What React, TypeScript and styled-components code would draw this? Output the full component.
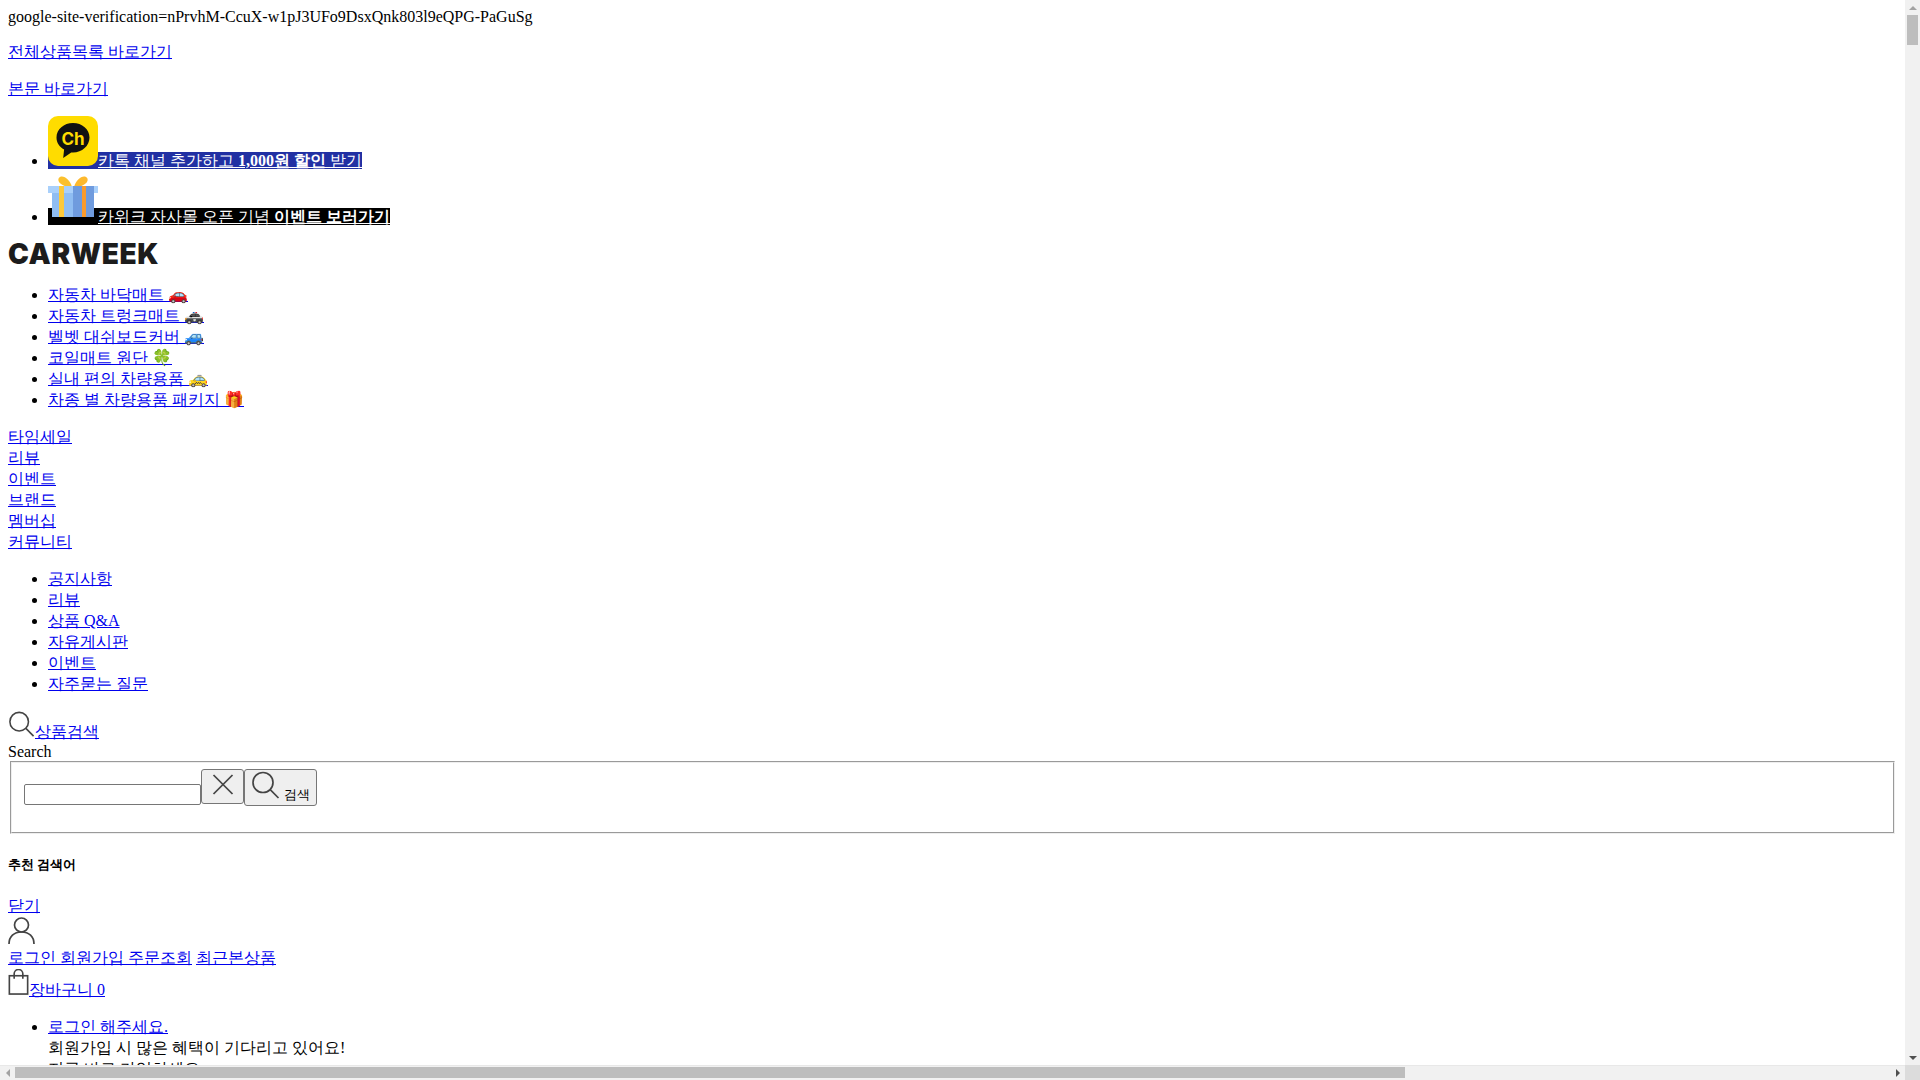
import React from "react";
import styled, { createGlobalStyle } from "styled-components";

const GlobalStyle = createGlobalStyle`
  html, body {
    margin: 0;
    height: 100%;
    overflow: hidden;
  }
  body {
    background: #fff;
    color: #000;
    font-family: "Liberation Serif", serif;
    font-size: 16px;
  }
`;

const categoryItems = [
  "자동차 바닥매트 🚗",
  "자동차 트렁크매트 🚓",
  "벨벳 대쉬보드커버 🚙",
  "코일매트 원단 🍀",
  "실내 편의 차량용품 🚕",
  "차종 별 차량용품 패키지 🎁",
];
const menuItems = ["타임세일", "리뷰", "이벤트", "브랜드", "멤버십", "커뮤니티"];
const communityItems = ["공지사항", "리뷰", "상품 Q&A", "자유게시판", "이벤트", "자주묻는 질문"];

const Shell = styled.div`
  display: grid;
  grid-template-columns: 1fr 15px;
  grid-template-rows: 1fr 15px;
  width: 100vw;
  height: 100vh;
`;

const Page = styled.div`
  overflow: hidden;
  padding: 8px;
  min-width: 0;
  min-height: 0;
`;

const VBar = styled.div`
  display: flex;
  flex-direction: column;
  align-items: center;
  background: #f1f1f1;
`;

const HBar = styled.div`
  display: flex;
  align-items: center;
  background: #f1f1f1;
  box-shadow: inset 0 1px #e8e8e8;
`;

const Corner = styled.div`
  background: #dcdcdc;
`;

const ArrowBox = styled.div`
  display: flex;
  flex: none;
  align-items: center;
  justify-content: center;
  width: 15px;
  height: 15px;
`;

const Arrow = styled.i<{ $dir: "up" | "down" | "left" | "right" }>`
  width: 0;
  height: 0;
  border: 4px solid transparent;
  ${(p) => (p.$dir === "up" ? "border-top: 0; border-bottom: 4px solid #a3a3a3;" : "")}
  ${(p) => (p.$dir === "down" ? "border-bottom: 0; border-top: 4px solid #505050;" : "")}
  ${(p) => (p.$dir === "left" ? "border-left: 0; border-right: 4px solid #a3a3a3;" : "")}
  ${(p) => (p.$dir === "right" ? "border-right: 0; border-left: 4px solid #505050;" : "")}
`;

const VThumb = styled.div`
  flex: none;
  width: 11px;
  height: 30px;
  background: #bdbdbd;
`;

const HThumb = styled.div`
  flex: none;
  width: 1390px;
  height: 11px;
  background: #bdbdbd;
`;

const Filler = styled.div`
  flex: 1;
`;

const Para = styled.p`
  margin: 16px 0;
`;

const List = styled.ul`
  margin: 16px 0;
  padding-left: 40px;
`;

const Link = styled.a`
  color: #0000ee;
  text-decoration: underline;
  cursor: pointer;
`;

const BannerLink = styled.a<{ $bg: string }>`
  color: #fff;
  text-decoration: underline;
  background: ${(p) => p.$bg};
`;

const BannerIcon = styled.svg`
  width: 50px;
  height: 50px;
`;

const Logo = styled.div`
  font-family: Inter, sans-serif;
  font-weight: 900;
  font-size: 28px;
  line-height: 20px;
  padding-bottom: 5px;
  letter-spacing: 0.6px;
  color: #1c1c1c;
`;

const BlockLink = styled.div`
  display: block;
`;

const Section = styled.div`
  margin: 16px 0;
`;

const LineIcon = styled.svg<{ $w: number; $h: number }>`
  width: ${(p) => p.$w}px;
  height: ${(p) => p.$h}px;
  fill: none;
  stroke: #444;
  stroke-width: 1.7;
`;

const Fieldset = styled.fieldset`
  margin: 0 2px;
  padding: 5.6px 12px 26px;
  border: 2px groove;
  min-width: min-content;
`;

const SearchInput = styled.input`
  width: 177px;
  height: 21px;
  padding: 1px 2px;
  box-sizing: border-box;
  border: 1px solid #767676;
  border-radius: 2px;
  font-size: 13.33px;
`;

const IconButton = styled.button`
  padding: 1px 6px;
  border: 1px solid #767676;
  border-radius: 3px;
  background: #efefef;
  font-family: "Liberation Sans", sans-serif;
  font-size: 13.33px;
`;

const Heading = styled.h5`
  margin: 22.18px 0;
  font-size: 13.28px;
  font-weight: bold;
`;

const KakaoIcon = () => (
  <BannerIcon viewBox="0 0 50 50">
    <rect width="50" height="50" rx="10" fill="#ffdc00" />
    <path d="M25 7C15.900 7 8.500 13.300 8.500 21.500c0 5.200 3 9.500 7.600 12l-.9 8.500 8-5.600c.6.1 1.200.1 1.800.1 9.100 0 16.500-6.700 16.500-15S34.100 7 25 7z" fill="#111" />
    <text x="25" y="29" textAnchor="middle" fontFamily="Inter, sans-serif" fontSize="17" fontWeight="700" fill="#ffdc00">Ch</text>
  </BannerIcon>
);

const GiftIcon = () => (
  <BannerIcon viewBox="0 0 50 50">
    <path d="M24 15C22 8 16 3 12 5c-4 2-1 10 12 10z" fill="#fbc02d" />
    <path d="M26 15c2-7 8-12 12-10 4 2 1 10-12 10z" fill="#fdb92e" />
    <rect y="14" width="50" height="7" fill="#a9d0fb" />
    <rect x="4" y="21" width="42" height="24" fill="#8fbdf2" />
    <rect x="25" y="14" width="21" height="31" fill="#6f9bde" />
    <rect x="11" y="14" width="5" height="31" fill="#fdc93a" />
    <rect x="34" y="14" width="4" height="31" fill="#fb9b2c" />
  </BannerIcon>
);

const SearchIcon = ({ w, h }: { w: number; h: number }) => (
  <LineIcon $w={w} $h={h} viewBox="0 0 28 28">
    <circle cx="11.500" cy="11.500" r="10" />
    <line x1="18.700" y1="18.700" x2="27" y2="27" />
  </LineIcon>
);

export default function App() {
  return (
    <Shell>
      <GlobalStyle />
      <Page>
        <div>google-site-verification=nPrvhM-CcuX-w1pJ3UFo9DsxQnk803l9eQPG-PaGuSg</div>
        <Para><Link>전체상품목록 바로가기</Link></Para>
        <Para><Link>본문 바로가기</Link></Para>
        <List>
          <li>
            <BannerLink $bg="#2130a3"><KakaoIcon />카톡 채널 추가하고 <b>1,000원 할인</b> 받기</BannerLink>
          </li>
          <li>
            <BannerLink $bg="#000"><GiftIcon />카위크 자사몰 오픈 기념 <b>이벤트 보러가기</b></BannerLink>
          </li>
        </List>
        <Logo>CARWEEK</Logo>
        <List>
          {categoryItems.map((t) => (
            <li key={t}><Link>{t}</Link></li>
          ))}
        </List>
        <Section>
          {menuItems.map((t) => (
            <BlockLink key={t}><Link>{t}</Link></BlockLink>
          ))}
        </Section>
        <List>
          {communityItems.map((t) => (
            <li key={t}><Link>{t}</Link></li>
          ))}
        </List>
        <div>
          <SearchIcon w={27} h={26} />
          <Link>상품검색</Link>
        </div>
        <div>Search</div>
        <Fieldset>
          <SearchInput />
          <IconButton>
            <LineIcon $w={29} $h={28} viewBox="0 0 28 28">
              <line x1="5" y1="4" x2="24" y2="23" />
              <line x1="24" y1="4" x2="5" y2="23" />
            </LineIcon>
          </IconButton>
          <IconButton>
            <SearchIcon w={29} h={28} /> 검색
          </IconButton>
        </Fieldset>
        <Heading>추천 검색어</Heading>
        <div><Link>닫기</Link></div>
        <div>
          <LineIcon $w={27} $h={27} viewBox="0 0 27 27">
            <circle cx="13.500" cy="8" r="7" />
            <path d="M1 27c0-7.500 5-12 12.500-12S26 19.500 26 27" />
          </LineIcon>
        </div>
        <div>
          <Link>로그인 회원가입 주문조회</Link> <Link>최근본상품</Link>
        </div>
        <div>
          <LineIcon $w={21} $h={26} viewBox="0 0 21 27">
            <rect x="1" y="7" width="19" height="19" />
            <path d="M6 10V5a4.500 4.500 0 0 1 9 0v5" />
          </LineIcon>
          <Link>장바구니 0</Link>
        </div>
        <List>
          <li>
            <Link>로그인 해주세요.</Link>
            <div>회원가입 시 많은 혜택이 기다리고 있어요!</div>
            <div>지금 바로 가입하세요.</div>
          </li>
        </List>
      </Page>
      <VBar>
        <ArrowBox><Arrow $dir="up" /></ArrowBox>
        <VThumb />
        <Filler />
        <ArrowBox><Arrow $dir="down" /></ArrowBox>
      </VBar>
      <HBar>
        <ArrowBox><Arrow $dir="left" /></ArrowBox>
        <HThumb />
        <Filler />
        <ArrowBox><Arrow $dir="right" /></ArrowBox>
      </HBar>
      <Corner />
    </Shell>
  );
}
